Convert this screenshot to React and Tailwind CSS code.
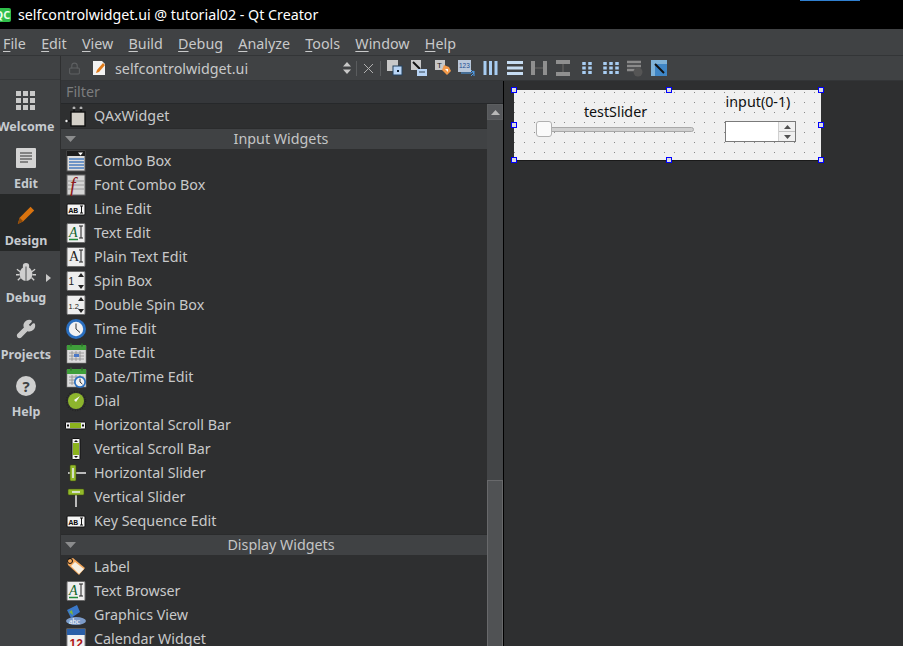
import React from 'react';
import { Lock, Wrench } from 'lucide-react';

// Small widget box icons, drawn by hand
const Doc = ({ children }) => (
  <svg width="22" height="22" viewBox="0 0 22 22">{children}</svg>
);

const PaperBox = ({ children }) => (
  <Doc>
    <rect x="2" y="1.5" width="18" height="19" rx="1" fill="#eeeeee" stroke="#6a6a6a" />
    {children}
  </Doc>
);

const TextEditIcon = ({ green }) => (
  <PaperBox>
    <text x="4" y="15" fontSize="14" fontFamily="Liberation Serif, serif" fontStyle={green ? 'italic' : 'normal'} fill={green ? '#11632b' : '#222'}>A</text>
    <path d="M14 4h4M16 4v12M14 16h4" stroke="#222" fill="none" />
    {green && <path d="M4 17.5h9" stroke="#1f8a3a" strokeWidth="1.5" />}
  </PaperBox>
);

const LineEditIcon = () => (
  <Doc>
    <rect x="2" y="6" width="18" height="11" rx="1" fill="#f4f4f4" stroke="#111" />
    <text x="3.5" y="14.5" fontSize="8" fontWeight="700" fontFamily="Liberation Mono, monospace" fill="#111">AB</text>
    <path d="M15 8h3M16.5 8v7M15 15h3" stroke="#111" fill="none" />
  </Doc>
);

const SpinIcon = ({ label }) => (
  <PaperBox>
    <text x="3.5" y="15" fontSize={label.length > 1 ? 7.5 : 10} fontFamily="Liberation Sans, sans-serif" fill="#222">{label}</text>
    <path d="M16 3l-3 4h6zM16 19l-3-4h6z" fill="#222" />
  </PaperBox>
);

const ClockFace = ({ cx, cy, r }) => (
  <g>
    <circle cx={cx} cy={cy} r={r} fill="#2a6fc0" />
    <circle cx={cx} cy={cy} r={r * 0.72} fill="#f1f1f1" />
    <path d={`M${cx} ${cy - r * 0.55}V${cy}L${cx + r * 0.4} ${cy + r * 0.35}`} stroke="#333" fill="none" />
  </g>
);

const CalendarBase = ({ children }) => (
  <Doc>
    <rect x="2" y="4" width="19" height="17" fill="#dcdcdc" stroke="#888" strokeWidth="0.6" />
    <rect x="2" y="3" width="19" height="5" fill="#3f9e3a" />
    <path d="M6 1.5v3M17 1.5v3" stroke="#2d6e2a" strokeWidth="1.5" />
    <path d="M4 11h15M4 14h15M4 17h15M7 9v10M11 9v10M15 9v10" stroke="#8d8d8d" strokeWidth="0.8" />
    {children}
  </Doc>
);

const icons = {
  qax: (
    <Doc>
      <circle cx="9" cy="3" r="1" fill="none" stroke="#ddd" />
      <circle cx="16" cy="3" r="1" fill="none" stroke="#ddd" />
      <path d="M9 4v3M16 4v3M1 16h5" stroke="#111" strokeWidth="1.4" />
      <circle cx="1.500" cy="16" r="1.2" fill="#eee" />
      <rect x="6" y="7" width="14" height="14" fill="#d4d0c8" stroke="#111" strokeWidth="1.4" />
    </Doc>
  ),
  combo: (
    <Doc>
      <rect x="2" y="1" width="18" height="20" fill="#dddddd" stroke="#555" />
      <rect x="2" y="1" width="18" height="5" fill="#1d1d1d" />
      <path d="M13 2.500h5l-2.500 3z" fill="#fff" />
      <path d="M4 9h15M4 12h15M4 15h15M4 18h15" stroke="#6d94c6" strokeWidth="2" />
    </Doc>
  ),
  font: (
    <Doc>
      <rect x="2" y="1" width="18" height="20" fill="#d5d5d5" stroke="#666" />
      <path d="M3 7h16M3 11h16M3 15h16" stroke="#9a9a9a" />
      <text x="5" y="18" fontSize="20" fontStyle="italic" fontFamily="Liberation Serif, serif" fill="#8e1b1b">f</text>
    </Doc>
  ),
  line: <LineEditIcon />,
  text: <TextEditIcon green />,
  plain: <TextEditIcon />,
  spin: <SpinIcon label="1" />,
  dspin: <SpinIcon label="1.2" />,
  time: (
    <Doc>
      <ClockFace cx={11} cy={11} r={10} />
    </Doc>
  ),
  date: (
    <CalendarBase>
      <rect x="9" y="12" width="5" height="3" fill="#4a78c8" />
    </CalendarBase>
  ),
  datetime: (
    <CalendarBase>
      <ClockFace cx={15} cy={16} r={6} />
    </CalendarBase>
  ),
  dial: (
    <Doc>
      <circle cx="11" cy="11" r="9.5" fill="none" stroke="#222" strokeWidth="1.5" strokeDasharray="1 1.5" />
      <circle cx="11" cy="11" r="8" fill="#8db52d" />
      <path d="M15 6l-6 4 2 2z" fill="#f2f2f2" />
    </Doc>
  ),
  hscroll: (
    <Doc>
      <rect x="0.5" y="8" width="20" height="7" rx="1" fill="#eee" stroke="#111" />
      <rect x="5" y="9" width="11" height="5" fill="#8bb31d" />
      <path d="M4 11.500l-2 0M17 11.500l2 0" stroke="#111" strokeWidth="2" />
    </Doc>
  ),
  vscroll: (
    <Doc>
      <rect x="7" y="0.5" width="8" height="21" rx="1" fill="#eee" stroke="#111" />
      <rect x="8" y="5" width="6" height="12" fill="#8bb31d" />
      <path d="M11 2l-2 2h4zM11 20l-2-2h4z" fill="#111" />
    </Doc>
  ),
  hslider: (
    <Doc>
      <path d="M3 11h18" stroke="#bbbbbb" strokeWidth="2" />
      <rect x="5" y="3" width="6" height="16" rx="1" fill="#92b92a" stroke="#3c4c10" strokeWidth="0.6" />
      <path d="M8 6v10" stroke="#eef" strokeWidth="1.5" />
    </Doc>
  ),
  vslider: (
    <Doc>
      <path d="M11 3v18" stroke="#bbbbbb" strokeWidth="2" />
      <rect x="3" y="3" width="16" height="6" rx="1" fill="#92b92a" stroke="#3c4c10" strokeWidth="0.6" />
      <path d="M7 6h8" stroke="#eef" strokeWidth="1.5" />
    </Doc>
  ),
  label: (
    <Doc>
      <path d="M2 4l6-2 12 10-6 7L3 9z" fill="#f3a75a" />
      <path d="M10 6l9 7-5 5-8-8z" fill="#f7f0e2" />
      <circle cx="5" cy="5" r="2.5" fill="none" stroke="#111" />
    </Doc>
  ),
  graphics: (
    <Doc>
      <path d="M2 6l10-5 3 7-9 6z" fill="#3a78c9" />
      <path d="M4 8l3-2 1 5z" fill="#7fb63a" />
      <ellipse cx="11" cy="17" rx="10" ry="4" fill="#7d9cc9" />
      <text x="4" y="20" fontSize="8" fontFamily="Liberation Serif, serif" fill="#fff">abc</text>
    </Doc>
  ),
  calendar: (
    <Doc>
      <rect x="2" y="1" width="18" height="21" fill="#f2f2f2" stroke="#888" />
      <rect x="2" y="1" width="18" height="6" fill="#2a5fa8" />
      <text x="4.500" y="20" fontSize="12" fontWeight="700" fontFamily="Liberation Sans, sans-serif" fill="#b01818">12</text>
    </Doc>
  ),
};

const inputWidgets = [
  ['Combo Box', 'combo'],
  ['Font Combo Box', 'font'],
  ['Line Edit', 'line'],
  ['Text Edit', 'text'],
  ['Plain Text Edit', 'plain'],
  ['Spin Box', 'spin'],
  ['Double Spin Box', 'dspin'],
  ['Time Edit', 'time'],
  ['Date Edit', 'date'],
  ['Date/Time Edit', 'datetime'],
  ['Dial', 'dial'],
  ['Horizontal Scroll Bar', 'hscroll'],
  ['Vertical Scroll Bar', 'vscroll'],
  ['Horizontal Slider', 'hslider'],
  ['Vertical Slider', 'vslider'],
  ['Key Sequence Edit', 'line'],
];

const displayWidgets = [
  ['Label', 'label'],
  ['Text Browser', 'text'],
  ['Graphics View', 'graphics'],
  ['Calendar Widget', 'calendar'],
];

const menus = [
  ['F', 'ile'],
  ['E', 'dit'],
  ['V', 'iew'],
  ['B', 'uild'],
  ['D', 'ebug'],
  ['A', 'nalyze'],
  ['T', 'ools'],
  ['W', 'indow'],
  ['H', 'elp'],
];

const WidgetRow = ({ name, icon }) => (
  <div className="flex h-6 shrink-0 items-center">
    <div className="ml-[4px] flex w-[22px] justify-center">{icons[icon]}</div>
    <span className="ml-[7px]">{name}</span>
  </div>
);

const GroupHeader = ({ title }) => (
  <div className="relative flex h-[21px] shrink-0 items-center justify-center border-t border-[#2a2b2c] bg-[#404244] pl-[14px] text-[#c4c5c6]">
    <svg className="absolute left-[4px] top-[7px]" width="11" height="7" viewBox="0 0 11 7">
      <path d="M0 0h11L5.500 6z" fill="#8b8c8d" />
    </svg>
    {title}
  </div>
);

const ModeButton = ({ label, active, arrow, children }) => (
  <div className={`relative flex h-[57px] flex-col items-center pr-[8px] ${active ? 'bg-[#262828]' : ''}`}>
    <div className="flex h-[37px] items-end justify-center pb-[6px]">{children}</div>
    <span className="text-[12.5px] leading-[19px] font-bold whitespace-nowrap text-[#c6cbd0]">{label}</span>
    {arrow && (
      <svg className="absolute left-[46px] top-[23px]" width="6" height="8" viewBox="0 0 6 8">
        <path d="M0 0l5 4-5 4z" fill="#c8c8c8" />
      </svg>
    )}
  </div>
);

const toolIcon = {
  a: <><rect x="1" y="1" width="11" height="11" fill="#c8c8c8" /><rect x="7" y="7" width="9" height="9" fill="#b8d4f5" stroke="#24425f" /><rect x="11" y="11" width="2" height="2" fill="#123" /></>,
  b: <><rect x="1" y="1" width="10" height="10" fill="#c8c8c8" /><path d="M3 3l7 7" stroke="#111" strokeWidth="2" /><rect x="7" y="10" width="10" height="7" fill="#b8d4f5" /><path d="M9 13h6" stroke="#345" /></>,
  c: <><rect x="1" y="1" width="10" height="10" fill="#c8c8c8" /><text x="3" y="9" fontSize="8" fill="#222" fontFamily="Liberation Sans, sans-serif">T</text><path d="M10 6l5 2 2 4-4 4-5-5z" fill="#f39a4a" /><path d="M11 10l3 0 0 3z" fill="#fff" /></>,
  d: <><rect x="0" y="1" width="13" height="12" fill="#b9c7da" /><text x="1" y="9" fontSize="6.5" fill="#1f4d92" fontFamily="Liberation Sans, sans-serif">123</text><path d="M3 14h10l3-2v5M13 11l3 3-3 3" stroke="#4d9be8" fill="none" /></>,
  e: <path d="M3 2v14M8.500 2v14M14 2v14" stroke="#a8cdf2" strokeWidth="3" />,
  f: <path d="M1 3.500h16M1 9h16M1 14.500h16" stroke="#c6dcf2" strokeWidth="3" />,
  g: <><path d="M3 2v14M15 2v14" stroke="#8f8f8f" strokeWidth="4" /><path d="M5 9h8" stroke="#555" strokeWidth="2" /></>,
  h: <><path d="M2 3h14M2 15h14" stroke="#8f8f8f" strokeWidth="4" /><path d="M9 5v8" stroke="#555" strokeWidth="2" /></>,
  i: <path d="M6 3v12M12 3v12" stroke="#a8cdf2" strokeWidth="3.5" strokeDasharray="3 1.5" />,
  j: <path d="M3 3v12M9 3v12M15 3v12" stroke="#a8cdf2" strokeWidth="3.5" strokeDasharray="3 1.5" />,
  k: <><path d="M1 3h14M1 7h14M1 11h8" stroke="#8a8a8a" strokeWidth="2.5" /><circle cx="12" cy="13" r="4.5" fill="#555" /></>,
  l: <><rect x="1" y="1" width="16" height="16" fill="#3f86c6" /><path d="M1 1h16v4H5v12H1z" fill="#7fb2d8" /><path d="M5 5l9 9" stroke="#111" strokeWidth="2" /></>,
};

const Handle = ({ className }) => (
  <div className={`absolute size-[6px] border border-[#0000ff] bg-[#dcdcdc] ${className}`} />
);

export default function App() {
  return (
    <div className="flex h-[646px] w-[903px] flex-col overflow-hidden bg-[#2e2f30] font-['Noto_Sans',sans-serif] text-[14.3px] text-[#c8c9ca]">
      {/* Title bar */}
      <div className="relative flex h-[29px] shrink-0 items-center bg-black text-white">
        <div className="ml-[-6px] flex h-[14px] w-[17px] items-center justify-center rounded-[2px] bg-[#2fbf4a] text-[11px] leading-none font-bold text-[#eaffea]">
          QC
        </div>
        <span className="ml-[7px] text-[14.25px]">selfcontrolwidget.ui @ tutorial02 - Qt Creator</span>
        <div className="absolute top-0 left-[800px] h-[1px] w-[60px] bg-[#2f7fd0]" />
      </div>

      {/* Menu bar */}
      <div className="flex h-[27px] shrink-0 items-center gap-[15.25px] border-b border-[#333537] bg-[#404244] pt-[3px] pl-[3px]">
        {menus.map(([key, rest]) => (
          <span key={key + rest}>
            <span className="underline underline-offset-2">{key}</span>
            {rest}
          </span>
        ))}
      </div>

      <div className="flex min-h-0 flex-1">
        {/* Mode bar */}
        <div className="flex w-[61px] shrink-0 flex-col border-r border-[#2e2f30] bg-[#404244]">
          <div className="h-[24px] shrink-0 border-b border-[#36383a]" />
          <ModeButton label="Welcome">
            <svg width="20" height="20" viewBox="0 0 20 20" fill="#c9c9c9">
              {[0, 7, 14].flatMap((y) => [0, 7, 14].map((x) => <rect key={`${x}-${y}`} x={x} y={y} width="5" height="5" />))}
            </svg>
          </ModeButton>
          <ModeButton label="Edit">
            <svg width="20" height="20" viewBox="0 0 20 20">
              <rect width="20" height="20" rx="1" fill="#d4d4d4" />
              <path d="M4 5h12M4 8h12M4 11h12M4 14h8" stroke="#333" />
            </svg>
          </ModeButton>
          <ModeButton label="Design" active>
            <svg width="20" height="20" viewBox="0 0 22 22">
              <path d="M2 21l2-7L16 2l4 4L8 18z" fill="#d9730f" />
              <path d="M2 21l2-7 4 4z" fill="#8a4a0c" />
            </svg>
          </ModeButton>
          <ModeButton label="Debug" arrow>
            <svg width="20" height="20" viewBox="0 0 22 22" fill="#cfcfcf">
              <ellipse cx="11" cy="13" rx="7" ry="8" />
              <circle cx="11" cy="4.500" r="3.5" />
              <path d="M11 5v16" stroke="#404244" />
              <path d="M1 8l4 3M21 8l-4 3M0 14h4M22 14h-4M2 20l3-3M20 20l-3-3" stroke="#cfcfcf" strokeWidth="1.5" />
            </svg>
          </ModeButton>
          <ModeButton label="Projects">
            <Wrench size={20} color="#c9c9c9" fill="#c9c9c9" />
          </ModeButton>
          <ModeButton label="Help">
            <div className="flex size-[20px] items-center justify-center rounded-full bg-[#cfcfcf] text-[15px] leading-none font-bold text-[#404244]">?</div>
          </ModeButton>
        </div>

        <div className="flex min-w-0 flex-1 flex-col">
          {/* Document toolbar */}
          <div className="flex h-[25px] shrink-0 items-center border-b border-[#333537] bg-[#404244]">
            <Lock size={13} color="#5e6062" className="ml-[7px]" />
            <svg className="ml-[10px]" width="16" height="16" viewBox="0 0 16 16">
              <path d="M2 1h9l3 3v11H2z" fill="#f2f2f2" />
              <path d="M5 13l1-3 6-7 2 2-6 7z" fill="#e07b1a" />
            </svg>
            <span className="mt-[2px] ml-[8px] w-[228px]">selfcontrolwidget.ui</span>
            <svg width="8" height="12" viewBox="0 0 8 12">
              <path d="M4 0l4 4.500H0zM4 12l4-4.500H0z" fill="#c8c8c8" />
            </svg>
            <div className="ml-[5px] h-[15px] w-px bg-[#5a5c5e]" />
            <svg className="ml-[6px]" width="11" height="11" viewBox="0 0 11 11">
              <path d="M1 1l9 9M10 1l-9 9" stroke="#b0b0b0" />
            </svg>
            <div className="ml-[6px] h-[15px] w-px bg-[#5a5c5e]" />
            <div className="ml-[5px] flex gap-[6px]">
              {Object.keys(toolIcon).map((k) => (
                <svg key={k} width="18" height="18" viewBox="0 0 18 18">{toolIcon[k]}</svg>
              ))}
            </div>
          </div>

          <div className="flex min-h-0 flex-1">
            {/* Widget box */}
            <div className="flex w-[443px] shrink-0 flex-col overflow-hidden border-r border-black">
              <div className="flex h-[23px] shrink-0 items-center border-b border-[#26282a] bg-[#35373a] pl-[5px] text-[#7c7d7e]">Filter</div>
              <div className="flex min-h-0 flex-1">
                <div className="flex min-w-0 flex-1 flex-col overflow-hidden">
                  <WidgetRow name="QAxWidget" icon="qax" />
                  <GroupHeader title="Input Widgets" />
                  {inputWidgets.map(([name, icon]) => (
                    <WidgetRow key={name} name={name} icon={icon} />
                  ))}
                  <div className="h-px shrink-0" />
                  <GroupHeader title="Display Widgets" />
                  {displayWidgets.map(([name, icon]) => (
                    <WidgetRow key={name} name={name} icon={icon} />
                  ))}
                </div>
                {/* Scroll bar */}
                <div className="flex w-[16px] shrink-0 flex-col bg-[#434547]">
                  <div className="flex h-[16px] shrink-0 items-center justify-center border border-[#5c5e60] bg-[#55575a]">
                    <svg width="9" height="5" viewBox="0 0 9 5"><path d="M4.500 0L9 5H0z" fill="#b8b8b8" /></svg>
                  </div>
                  <div className="h-[360px] shrink-0 bg-[#434547]" />
                  <div className="flex-1 border border-b-0 border-[#68696b] bg-[#505254]" />
                </div>
              </div>
            </div>

            {/* Form editor */}
            <div className="flex-1 bg-[#2e2f30] pt-[9px] pl-[10px]">
              <div className="relative flex h-[70px] w-[307px] bg-[#f0f0f0] bg-[radial-gradient(circle_at_0.5px_2.5px,#8a8a8a_0.7px,transparent_0.9px)] bg-[length:10px_10px] text-[14.3px] text-[#101010] shadow-[0_1px_0_#1a1a1a]">
                <div className="ml-[22px] flex w-[158px] flex-col pt-[13px]">
                  <span className="pl-[1px] text-center leading-[17px]">testSlider</span>
                  <div className="relative mt-[1px] flex h-[16px] items-center">
                    <div className="h-[5px] w-full rounded-full border border-[#a8a8a8] bg-[#d0d0d0]" />
                    <div className="absolute left-0 size-[16px] rounded-[3px] border border-[#b0b0b0] bg-[#fafafa]" />
                  </div>
                </div>
                <div className="ml-[31px] flex w-[71px] flex-col pt-[3px]">
                  <span className="pr-[5px] text-center leading-[17px] whitespace-nowrap">input(0-1)</span>
                  <div className="mt-[11px] flex h-[21px] border border-[#7a7a7a] bg-white">
                    <div className="flex-1" />
                    <div className="flex w-[17px] flex-col border-l border-[#d0d0d0]">
                      <div className="flex flex-1 items-center justify-center border-b border-[#c0c0c0] bg-[#f0f0f0]">
                        <svg width="7" height="4" viewBox="0 0 7 4"><path d="M3.500 0L7 4H0z" fill="#505050" /></svg>
                      </div>
                      <div className="flex flex-1 items-center justify-center bg-[#f0f0f0]">
                        <svg width="7" height="4" viewBox="0 0 7 4"><path d="M0 0h7L3.500 4z" fill="#505050" /></svg>
                      </div>
                    </div>
                  </div>
                </div>
                <Handle className="-top-[3px] -left-[3px]" />
                <Handle className="-top-[3px] left-[152px]" />
                <Handle className="-top-[3px] -right-[3px]" />
                <Handle className="top-[32px] -left-[3px]" />
                <Handle className="top-[32px] -right-[3px]" />
                <Handle className="-bottom-[3px] -left-[3px]" />
                <Handle className="-bottom-[3px] left-[152px]" />
                <Handle className="-bottom-[3px] -right-[3px]" />
              </div>
            </div>
          </div>
        </div>
      </div>
    </div>
  );
}
